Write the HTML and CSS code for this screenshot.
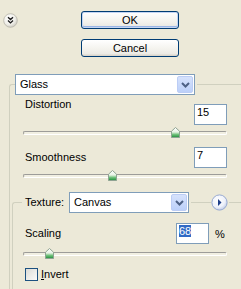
FILE: index.html
```html
<!DOCTYPE html>
<html lang="en">
<head>
  <meta charset="UTF-8">
  <title>Glass</title>
  <link rel="stylesheet" href="styles.css">
</head>
<body>
  <div class="top">
    <span class="more">
      <svg width="15" height="15" viewBox="0 0 15 15">
        <defs>
          <radialGradient id="moreFill" cx="40%" cy="35%" r="70%">
            <stop offset="0" stop-color="#ffffff"/>
            <stop offset="0.6" stop-color="#f1f0ea"/>
            <stop offset="1" stop-color="#c9c7bd"/>
          </radialGradient>
        </defs>
        <circle cx="7.5" cy="7.5" r="6.8" fill="url(#moreFill)" stroke="#b7b5ab" stroke-width="0.8"/>
        <path d="M5 4.3 L7.5 6.6 L10 4.3 M5 7.6 L7.5 9.9 L10 7.6" fill="none" stroke="#1e1e1e" stroke-width="1.4"/>
      </svg>
    </span>
    <div class="actions">
      <button class="btn btn-default">OK</button>
      <button class="btn">Cancel</button>
    </div>
  </div>

  <fieldset class="group">
    <legend class="group-title">
      <span class="combo combo-filter">
        <span class="combo-value">Glass</span>
        <span class="combo-arrow">
          <svg width="9" height="6" viewBox="0 0 9 6"><path d="M1 1 L4.5 4.5 L8 1" fill="none" stroke="#4d6185" stroke-width="2"/></svg>
        </span>
      </span>
    </legend>

    <div class="param param-top">
      <span class="param-label">Distortion</span>
      <span class="field field-low">15</span>
    </div>
    <div class="slider">
      <div class="slider-track"></div>
      <span class="slider-thumb" style="left: 148px">
        <svg width="9" height="11" viewBox="0 0 9 11"><use href="#thumb"/></svg>
      </span>
    </div>

    <div class="param param-mid">
      <span class="param-label label-low">Smoothness</span>
      <span class="field">7</span>
    </div>
    <div class="slider">
      <div class="slider-track"></div>
      <span class="slider-thumb" style="left: 85px">
        <svg width="9" height="11" viewBox="0 0 9 11"><use href="#thumb"/></svg>
      </span>
    </div>

    <fieldset class="group group-texture">
      <legend class="group-title texture-title">
        <span class="legend-row">
          <span class="legend-label">Texture:</span>
          <span class="combo combo-texture">
            <span class="combo-value">Canvas</span>
            <span class="combo-arrow">
              <svg width="9" height="6" viewBox="0 0 9 6"><path d="M1 1 L4.5 4.5 L8 1" fill="none" stroke="#4d6185" stroke-width="2"/></svg>
            </span>
          </span>
          <span class="legend-rule"></span>
          <span class="round-btn">
            <svg width="17" height="17" viewBox="0 0 17 17">
              <defs>
                <radialGradient id="roundFill" cx="40%" cy="35%" r="70%">
                  <stop offset="0" stop-color="#ffffff"/>
                  <stop offset="0.65" stop-color="#eef1fa"/>
                  <stop offset="1" stop-color="#b9c6e4"/>
                </radialGradient>
              </defs>
              <circle cx="8.5" cy="8.5" r="7.6" fill="url(#roundFill)" stroke="#8ea3cf" stroke-width="0.9"/>
              <path d="M7 5 L10.5 8.5 L7 12 Z" fill="#1f3f8a"/>
            </svg>
          </span>
        </span>
      </legend>

      <div class="param param-scale">
        <span class="param-label label-low">Scaling</span>
        <span class="field"><span class="selected">68</span></span>
        <span class="unit">%</span>
      </div>
      <div class="slider slider-inner">
        <div class="slider-track"></div>
        <span class="slider-thumb" style="left: 22px">
          <svg width="9" height="11" viewBox="0 0 9 11"><use href="#thumb"/></svg>
        </span>
      </div>

      <div class="check">
        <span class="check-box"></span>
        <span class="check-label"><u>I</u>nvert</span>
      </div>
    </fieldset>
  </fieldset>

  <svg class="defs" width="0" height="0">
    <defs>
      <linearGradient id="thumbFill" x1="0" y1="0" x2="0" y2="1">
        <stop offset="0" stop-color="#ffffff"/>
        <stop offset="0.45" stop-color="#e9f3e6"/>
        <stop offset="0.7" stop-color="#6fc07a"/>
        <stop offset="1" stop-color="#1e8c3a"/>
      </linearGradient>
      <g id="thumb">
        <path d="M0.5 4.2 L4.5 0.5 L8.5 4.2 L8.5 10.5 L0.5 10.5 Z" fill="url(#thumbFill)" stroke="#8fa393" stroke-width="1"/>
      </g>
    </defs>
  </svg>
</body>
</html>
```

FILE: styles.css
```css
* {
  box-sizing: border-box;
}
body {
  margin: 0;
  width: 241px;
  height: 289px;
  overflow: hidden;
  background-color: #ece9d8;
  font-family: "Liberation Sans", Arial, sans-serif;
  font-size: 11px;
  line-height: 13px;
  color: #000;
}
.defs {
  position: absolute;
  top: 0;
  left: 0;
}

/* top buttons */
.top {
  display: flex;
  align-items: flex-start;
  padding: 11px 0 0 3px;
}
.more {
  display: block;
  width: 15px;
  height: 15px;
  margin-top: 2px;
}
.more svg {
  display: block;
}
.actions {
  display: flex;
  flex-direction: column;
  gap: 10px;
  margin-left: 63px;
  width: 98px;
}
.btn {
  height: 18px;
  padding: 0;
  border: 1px solid #003c74;
  border-radius: 3px;
  background: linear-gradient(#ffffff, #f4f3ee 55%, #ecebe6 85%, #d6d0c5);
  font-family: "Liberation Sans", Arial, sans-serif;
  font-size: 11px;
  line-height: 16px;
  color: #000;
}
.btn-default {
  box-shadow: inset 0 0 0 1px #c4d5f3, inset 0 -1px 0 1px #9ab5e6;
}

/* group boxes, open on the right and bottom where the panel is cut */
.group {
  margin: 17px 0 0 9px;
  padding: 0;
  width: 232px;
  min-width: 0;
  border: 1px solid #d0d0bf;
  border-right: none;
  border-bottom: none;
  border-radius: 3px 0 0 0;
}
.group-title {
  margin-left: 5px;
  padding: 0 2px 0 0;
}
.group-texture {
  width: 229px;
  margin: 10px 0 0 2px;
  padding-bottom: 9px;
}
.texture-title {
  margin-left: 9px;
  padding: 0 1px 0 3px;
}
.legend-row {
  display: flex;
  align-items: center;
}
.legend-label {
  width: 44px;
}
.legend-rule {
  width: 20px;
  height: 1px;
  margin-left: 2px;
  background-color: #d0d0bf;
}
.round-btn {
  display: block;
  width: 17px;
  height: 17px;
}
.round-btn svg {
  display: block;
}

/* combo box */
.combo {
  display: flex;
  align-items: flex-start;
  height: 21px;
  border: 1px solid #7f9db9;
  background-color: #fff;
}
.combo-filter {
  width: 180px;
}
.combo-texture {
  width: 120px;
}
.combo-value {
  flex: 1;
  padding-left: 4px;
  line-height: 19px;
}
.combo-arrow {
  display: flex;
  align-items: center;
  justify-content: center;
  width: 16px;
  height: 17px;
  margin: 1px 1px 0 0;
  border: 1px solid #bccdf5;
  border-radius: 2px;
  background: linear-gradient(#d6e2fc, #bcd0f9);
}
.combo-arrow svg {
  display: block;
}

/* parameter rows */
.param {
  display: flex;
  align-items: flex-start;
  justify-content: space-between;
  width: 217px;
  padding-left: 15px;
}
.param-top {
  margin-top: 3px;
}
.param-mid {
  margin-top: 8px;
}
.param-scale {
  width: 212px;
  margin-top: 10px;
  padding-left: 12px;
}
.param-scale .param-label {
  flex: 1;
}
.label-low {
  margin-top: 4px;
}
.field {
  display: block;
  width: 33px;
  height: 21px;
  padding: 1px 0 0 2px;
  border: 1px solid #7f9db9;
  background-color: #fff;
}
.field-low {
  margin-top: 6px;
}
.selected {
  background-color: #316ac5;
  color: #fff;
}
.unit {
  width: 10px;
  margin: 5px 0 0 6px;
}

/* sliders */
.slider {
  position: relative;
  width: 204px;
  height: 12px;
  margin: 2px 0 0 13px;
}
.slider-inner {
  margin: 4px 0 0 10px;
}
.slider-track {
  position: relative;
  top: 4px;
  height: 4px;
  border: 1px solid;
  border-color: #9d9c99 #ffffff #ffffff #9d9c99;
  border-radius: 2px;
  background-color: #f1efe2;
}
.slider-thumb {
  position: absolute;
  top: 0;
  width: 9px;
  height: 11px;
}
.slider-thumb svg {
  display: block;
}

/* checkbox */
.check {
  display: flex;
  align-items: center;
  margin: 8px 0 0 12px;
}
.check-box {
  width: 13px;
  height: 13px;
  border: 1px solid #1c5180;
  background: linear-gradient(135deg, #dcdcd7, #fbfbf9);
}
.check-label {
  margin-left: 3px;
}
```
